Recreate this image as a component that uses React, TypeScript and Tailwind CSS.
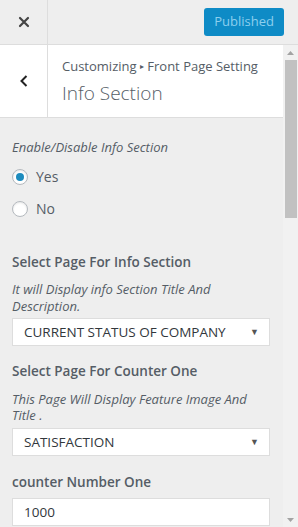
import React from "react";

const font = { fontFamily: '"Open Sans", "Noto Sans", Arial, sans-serif' };

function Radio({ checked, label }: { checked?: boolean; label: string }) {
  return (
    <label className="flex h-[32px] items-center gap-[8px]">
      <span className="flex h-[16px] w-[16px] items-center justify-center rounded-full border border-[#b4b9be] bg-white shadow-[inset_0_1px_2px_rgba(0,0,0,0.1)]">
        {checked && <span className="h-[8px] w-[8px] rounded-full bg-[#1e8cbe]" />}
      </span>
      <span className="text-[14px] text-[#555d66]">{label}</span>
    </label>
  );
}

function SelectBox({ value }: { value: string }) {
  return (
    <div className="flex h-[28px] w-[258px] items-center justify-between border border-[#ddd] bg-white pl-[11px] pr-[10px] text-[13.5px] text-[#32373c]">
      <span>{value}</span>
      <span className="text-[9px] text-[#555]">▼</span>
    </div>
  );
}

export default function App() {
  return (
    <div className="flex h-[527px] w-[298px] flex-col overflow-hidden bg-[#eee]" style={font}>
      <div className="flex h-[45px] shrink-0 items-center border-b border-[#ddd] bg-[#eee]">
        <div className="flex h-full w-[48px] items-center justify-center border-r border-[#ddd]">
          <svg width="12" height="12" viewBox="0 0 12 12">
            <path d="M2 2L10 10M10 2L2 10" stroke="#444" strokeWidth="2.2" strokeLinecap="round" />
          </svg>
        </div>
        <div className="flex flex-1 justify-end pr-[14px]">
          <button className="h-[28px] rounded-[3px] bg-[#0e8bc6] px-[10px] text-[13px] text-[#8ccfee]">
            Published
          </button>
        </div>
      </div>
      <div className="flex min-h-0 flex-1">
        <div className="flex min-w-0 flex-1 flex-col">
          <div className="flex h-[73px] shrink-0 border-b border-[#ddd] bg-white">
            <div className="flex w-[48px] items-center justify-center border-r border-[#ddd]">
              <svg width="10" height="14" viewBox="0 0 10 14">
                <path d="M7.5 2L2.5 7L7.5 12" stroke="#222" strokeWidth="2" fill="none" />
              </svg>
            </div>
            <div className="flex flex-col justify-center pl-[14px]">
              <div className="text-[13px] leading-[18px] text-[#555d66]">
                Customizing <span className="text-[8px] align-[2px]">▸</span> Front Page Setting
              </div>
              <div className="mt-[5px] text-[19px] font-light leading-[26px] text-[#555d66]">Info Section</div>
            </div>
          </div>
          <div className="flex flex-col px-[12px] pt-[20px]">
            <div className="text-[13px] italic text-[#555d66]">Enable/Disable Info Section</div>
            <div className="mt-[3px]">
              <Radio checked label="Yes" />
              <Radio label="No" />
            </div>
            <div className="mt-[27px] text-[13.5px] font-semibold text-[#555d66]">Select Page For Info Section</div>
            <div className="mt-[9px] text-[13px] italic leading-[17px] text-[#555d66]">
              It will Display info Section Title And Description.
            </div>
            <div className="mt-[3px]">
              <SelectBox value="CURRENT STATUS OF COMPANY" />
            </div>
            <div className="mt-[15px] text-[13.5px] font-semibold text-[#555d66]">Select Page For Counter One</div>
            <div className="mt-[10px] text-[13px] italic leading-[16px] text-[#555d66]">
              This Page Will Display Feature Image And Title .
            </div>
            <div className="mt-[5px]">
              <SelectBox value="SATISFACTION" />
            </div>
            <div className="mt-[16px] text-[13.5px] font-semibold text-[#555d66]">counter Number One</div>
            <div className="mt-[6px] flex h-[28px] w-[258px] items-center border border-[#ddd] bg-white pl-[11px] text-[13.5px] text-[#32373c]">
              1000
            </div>
          </div>
        </div>
        <div className="flex w-[15px] shrink-0 flex-col items-center bg-[#f1f1f1]">
          <div className="flex h-[15px] items-center justify-center">
            <svg width="7" height="4" viewBox="0 0 7 4"><path d="M0 4L3.5 0L7 4Z" fill="#a3a3a3" /></svg>
          </div>
          <div className="h-[158px] w-[12px] bg-[#c1c1c1]" />
          <div className="flex-1" />
          <div className="flex h-[15px] items-center justify-center">
            <svg width="7" height="4" viewBox="0 0 7 4"><path d="M0 0L3.5 4L7 0Z" fill="#a3a3a3" /></svg>
          </div>
        </div>
      </div>
    </div>
  );
}
